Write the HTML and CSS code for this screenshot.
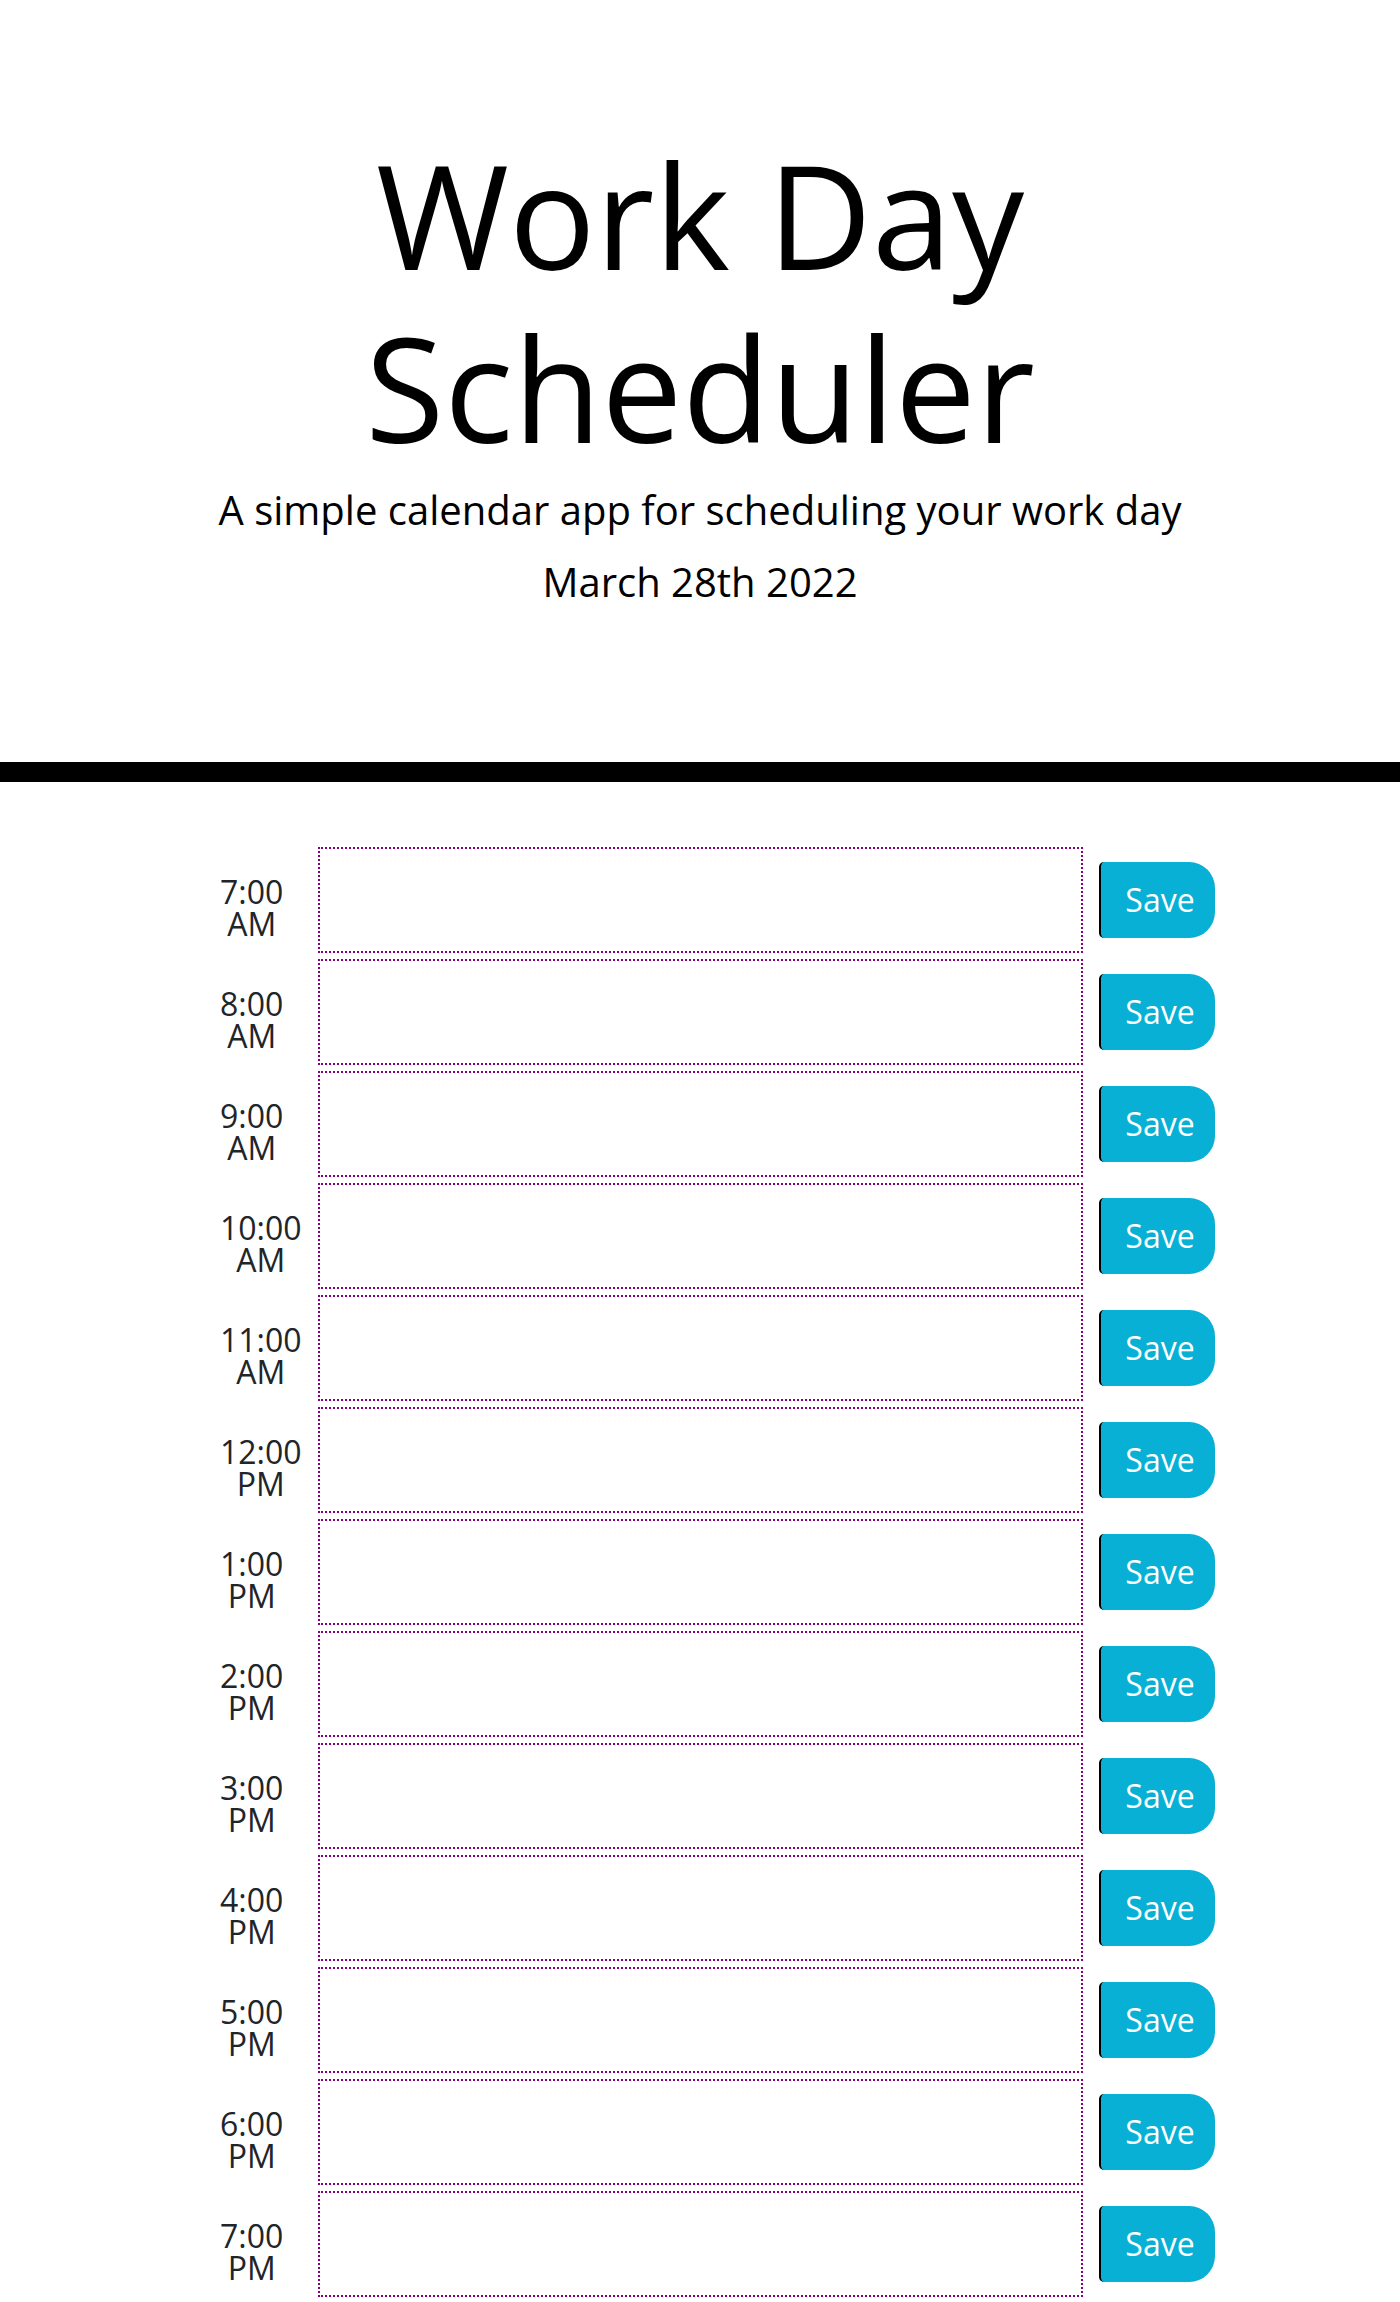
FILE: index.html
```html
<!DOCTYPE html>
<html lang="en">
<head>
<meta charset="utf-8">
<title>Work Day Scheduler</title>
<link rel="stylesheet" href="styles.css">
</head>
<body>
<header class="jumbotron">
  <div class="header-inner">
    <h1 class="title">Work Day Scheduler</h1>
    <p class="lead">A simple calendar app for scheduling your work day</p>
    <p class="current-day">March 28th 2022</p>
  </div>
</header>
<main class="schedule">
  <div class="time-block"><div class="hour"><span class="hour-label">7:00<br>AM</span></div><textarea class="description"></textarea><button class="saveBtn">Save</button></div>
  <div class="time-block"><div class="hour"><span class="hour-label">8:00<br>AM</span></div><textarea class="description"></textarea><button class="saveBtn">Save</button></div>
  <div class="time-block"><div class="hour"><span class="hour-label">9:00<br>AM</span></div><textarea class="description"></textarea><button class="saveBtn">Save</button></div>
  <div class="time-block"><div class="hour"><span class="hour-label">10:00<br>AM</span></div><textarea class="description"></textarea><button class="saveBtn">Save</button></div>
  <div class="time-block"><div class="hour"><span class="hour-label">11:00<br>AM</span></div><textarea class="description"></textarea><button class="saveBtn">Save</button></div>
  <div class="time-block"><div class="hour"><span class="hour-label">12:00<br>PM</span></div><textarea class="description"></textarea><button class="saveBtn">Save</button></div>
  <div class="time-block"><div class="hour"><span class="hour-label">1:00<br>PM</span></div><textarea class="description"></textarea><button class="saveBtn">Save</button></div>
  <div class="time-block"><div class="hour"><span class="hour-label">2:00<br>PM</span></div><textarea class="description"></textarea><button class="saveBtn">Save</button></div>
  <div class="time-block"><div class="hour"><span class="hour-label">3:00<br>PM</span></div><textarea class="description"></textarea><button class="saveBtn">Save</button></div>
  <div class="time-block"><div class="hour"><span class="hour-label">4:00<br>PM</span></div><textarea class="description"></textarea><button class="saveBtn">Save</button></div>
  <div class="time-block"><div class="hour"><span class="hour-label">5:00<br>PM</span></div><textarea class="description"></textarea><button class="saveBtn">Save</button></div>
  <div class="time-block"><div class="hour"><span class="hour-label">6:00<br>PM</span></div><textarea class="description"></textarea><button class="saveBtn">Save</button></div>
  <div class="time-block"><div class="hour"><span class="hour-label">7:00<br>PM</span></div><textarea class="description"></textarea><button class="saveBtn">Save</button></div>
</main>
</body>
</html>
```

FILE: styles.css
```css
html, body {
  margin: 0;
  padding: 0;
  background: #ffffff;
}

body {
  font-family: "Open Sans", "Noto Sans", sans-serif;
  color: #212529;
}

.jumbotron {
  text-align: center;
  color: #000000;
  padding: 128px 0 156px;
  border-bottom: 20px solid #000000;
}

.header-inner {
  width: 1000px;
  margin: 0 auto;
}

.title {
  font-size: 144px;
  line-height: 1.2;
  font-weight: 400;
  margin: 0 auto 12px;
  max-width: 820px;
}

.lead {
  font-size: 40px;
  line-height: 48px;
  margin: 0 0 24px;
}

.current-day {
  font-size: 40px;
  line-height: 48px;
  margin: 0;
}

.schedule {
  width: 1140px;
  margin: 65px auto 0;
  padding-left: 90px;
  box-sizing: border-box;
}

.time-block {
  display: flex;
  align-items: flex-start;
  height: 112px;
}

.hour {
  width: 98px;
  flex: none;
  padding-top: 29px;
}

.hour-label {
  display: inline-block;
  text-align: center;
  font-size: 32px;
  line-height: 32px;
  color: #212529;
}

.description {
  box-sizing: border-box;
  width: 765px;
  height: 106px;
  flex: none;
  margin: 0;
  padding: 10px;
  border: 2px dotted #800080;
  background: #ffffff;
  resize: none;
  font-family: inherit;
  font-size: 20px;
}

.saveBtn {
  box-sizing: border-box;
  margin: 15px 0 0 16px;
  width: 116px;
  height: 76px;
  flex: none;
  padding: 0 0 0 4px;
  border: none;
  border-left: 2px solid #000000;
  border-radius: 5px 26px 26px 5px;
  background: #08b0d5;
  color: #ffffff;
  font-family: inherit;
  font-size: 32px;
  line-height: 1;
}
```
